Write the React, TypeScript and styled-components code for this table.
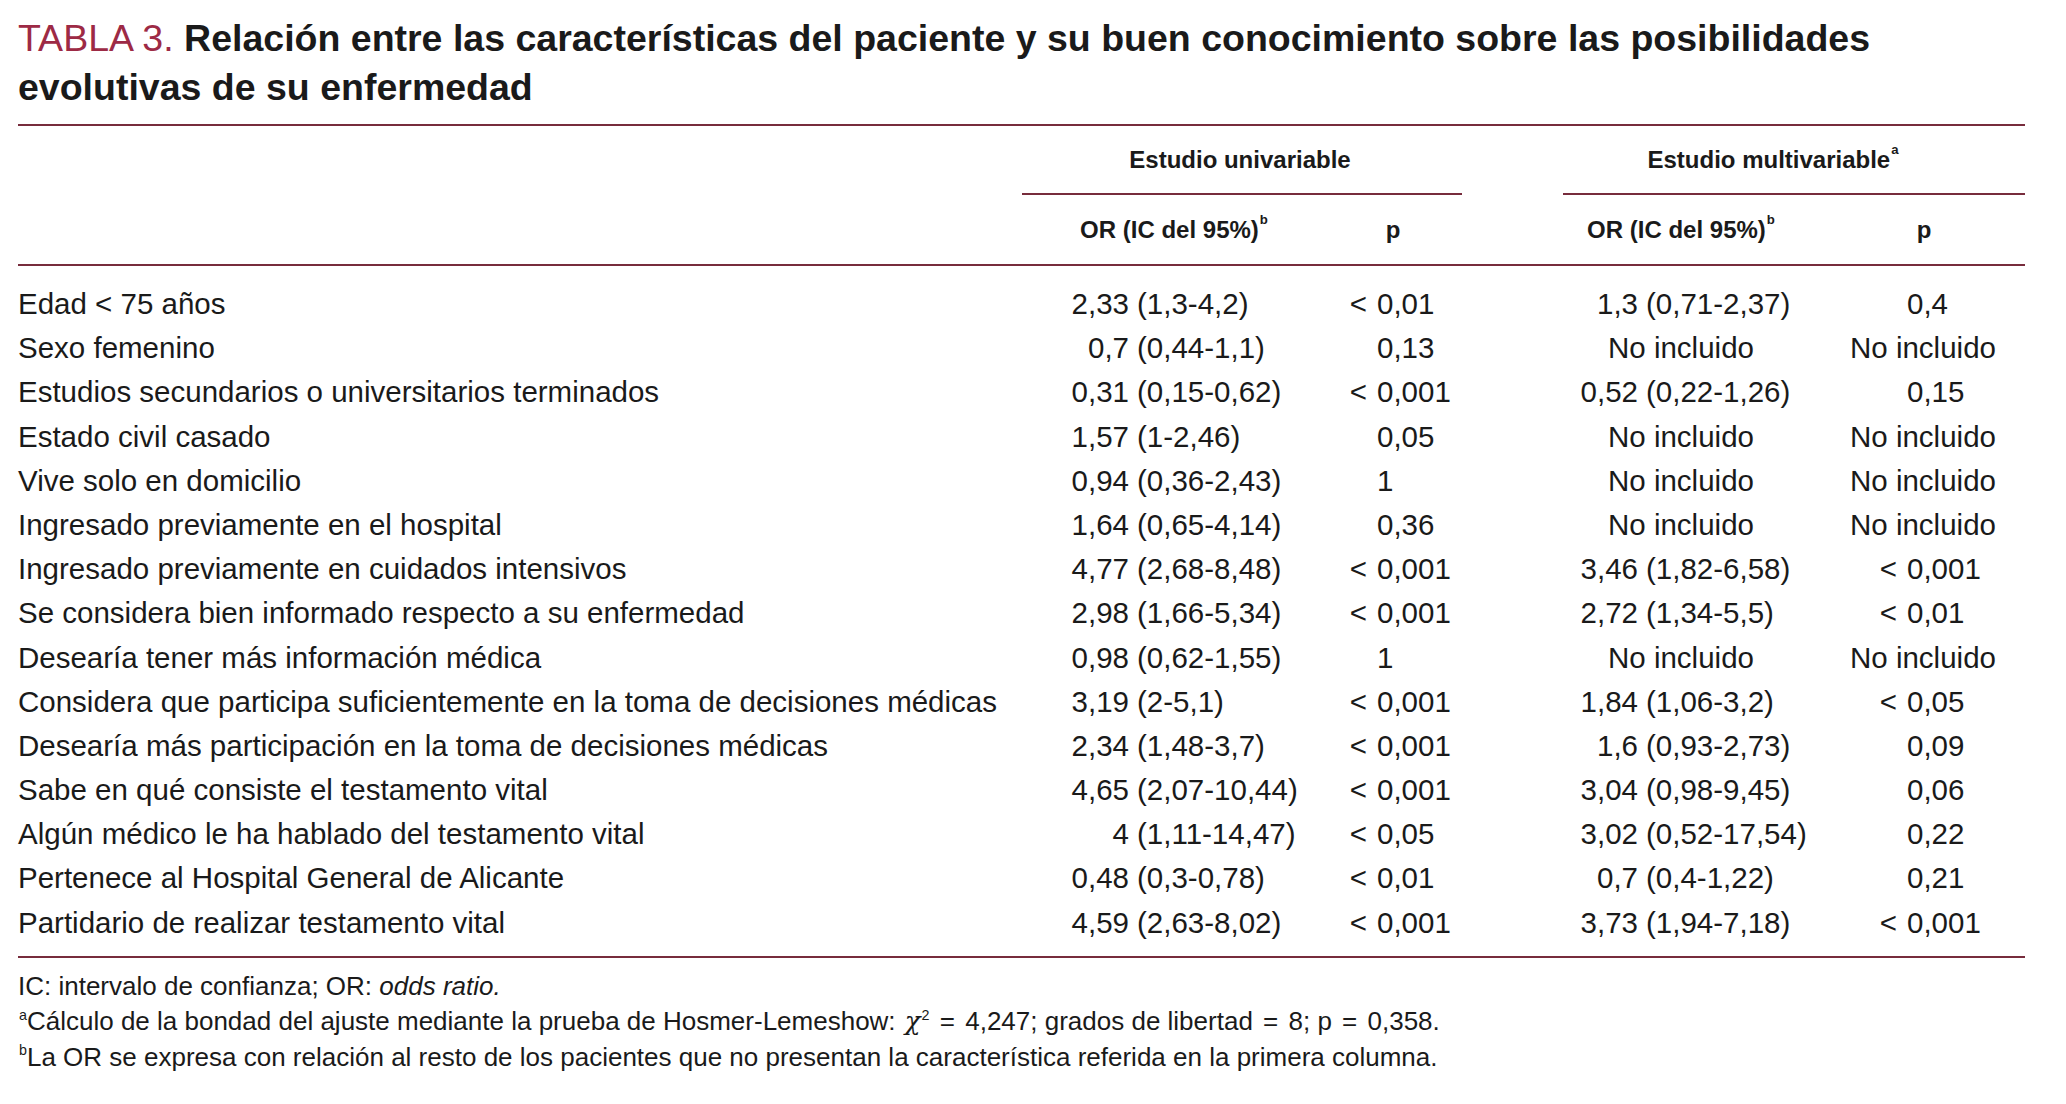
import React from "react";
import styled, { createGlobalStyle } from "styled-components";

const COLS = "1004px 310px 130px 101px 287px 175px";
const RULE = "#772c3c";
const TITLE_RED = "#9d2a45";
const INK = "#1a1a1a";
const BODY_FS = "29.5px";
const ROW_H = "44.2px";

const Global = createGlobalStyle`
  html, body { margin: 0; padding: 0; background: #ffffff; }
  body { font-family: "Liberation Sans", Arial, sans-serif; color: ${INK}; }
`;

const Page = styled.div`
  width: 2066px;
  height: 1104px;
  box-sizing: border-box;
  padding: 14px 41px 0 18px;
  overflow: hidden;
`;

const Title = styled.h1`
  margin: 0;
  font-size: 37.5px;
  line-height: 49px;
  font-weight: 700;
  color: ${INK};
  white-space: nowrap;
`;

const TitleLabel = styled.span`
  font-weight: 400;
  color: ${TITLE_RED};
`;

const Table = styled.div`
  display: grid;
  grid-template-columns: ${COLS};
  margin-top: 12px;
`;

const Rule = styled.div<{ $cols?: string }>`
  grid-column: ${(p) => p.$cols ?? "1 / -1"};
  height: 2px;
  background: ${RULE};
`;

const Spacer = styled.div<{ $h: number }>`
  grid-column: 1 / -1;
  height: ${(p) => p.$h}px;
`;

const GroupHead = styled.div<{ $cols: string; $pr?: number }>`
  grid-column: ${(p) => p.$cols};
  height: 67px;
  display: flex;
  align-items: center;
  justify-content: center;
  padding-right: ${(p) => p.$pr ?? 0}px;
  font-size: 24px;
  font-weight: 700;
  white-space: nowrap;
`;

const SubHead = styled.div<{ $pr?: number }>`
  height: 69px;
  display: flex;
  align-items: center;
  justify-content: center;
  padding-right: ${(p) => p.$pr ?? 0}px;
  font-size: 24px;
  font-weight: 700;
  white-space: nowrap;
`;

const Empty = styled.div``;

const Sup = styled.span`
  font-size: 0.55em;
  position: relative;
  top: -0.75em;
  line-height: 0;
  margin-left: 1px;
`;

const Cell = styled.div`
  font-size: ${BODY_FS};
  line-height: ${ROW_H};
  height: ${ROW_H};
  white-space: nowrap;
  display: flex;
`;

const Label = styled(Cell)``;

const NumPart = styled.span<{ $w: number }>`
  flex: none;
  width: ${(p) => p.$w}px;
  text-align: right;
`;

const RangePart = styled.span`
  margin-left: 8px;
`;

const Prefix = styled.span<{ $w: number }>`
  flex: none;
  width: ${(p) => p.$w}px;
  box-sizing: border-box;
  padding-right: 10px;
  text-align: right;
`;

const NotIncluded = styled(Cell)<{ $pl: number }>`
  padding-left: ${(p) => p.$pl}px;
`;

const Notes = styled.div`
  margin-top: 11px;
  font-size: 26px;
  line-height: 35.5px;
  white-space: nowrap;
`;

const Note = styled.div``;

const Chi = styled.span`
  font-family: "DejaVu Serif", "Liberation Serif", serif;
  font-style: italic;
  margin-left: 2px;
`;

const Eq = styled.span`
  margin: 0 3px;
`;

type Row = {
  label: string;
  uOr: string;
  uP: string;
  mOr: string | null;
  mP: string | null;
};

const rows: Row[] = [
  { label: "Edad < 75 años", uOr: "2,33 (1,3-4,2)", uP: "< 0,01", mOr: "1,3 (0,71-2,37)", mP: "0,4" },
  { label: "Sexo femenino", uOr: "0,7 (0,44-1,1)", uP: "0,13", mOr: null, mP: null },
  { label: "Estudios secundarios o universitarios terminados", uOr: "0,31 (0,15-0,62)", uP: "< 0,001", mOr: "0,52 (0,22-1,26)", mP: "0,15" },
  { label: "Estado civil casado", uOr: "1,57 (1-2,46)", uP: "0,05", mOr: null, mP: null },
  { label: "Vive solo en domicilio", uOr: "0,94 (0,36-2,43)", uP: "1", mOr: null, mP: null },
  { label: "Ingresado previamente en el hospital", uOr: "1,64 (0,65-4,14)", uP: "0,36", mOr: null, mP: null },
  { label: "Ingresado previamente en cuidados intensivos", uOr: "4,77 (2,68-8,48)", uP: "< 0,001", mOr: "3,46 (1,82-6,58)", mP: "< 0,001" },
  { label: "Se considera bien informado respecto a su enfermedad", uOr: "2,98 (1,66-5,34)", uP: "< 0,001", mOr: "2,72 (1,34-5,5)", mP: "< 0,01" },
  { label: "Desearía tener más información médica", uOr: "0,98 (0,62-1,55)", uP: "1", mOr: null, mP: null },
  { label: "Considera que participa suficientemente en la toma de decisiones médicas", uOr: "3,19 (2-5,1)", uP: "< 0,001", mOr: "1,84 (1,06-3,2)", mP: "< 0,05" },
  { label: "Desearía más participación en la toma de decisiones médicas", uOr: "2,34 (1,48-3,7)", uP: "< 0,001", mOr: "1,6 (0,93-2,73)", mP: "0,09" },
  { label: "Sabe en qué consiste el testamento vital", uOr: "4,65 (2,07-10,44)", uP: "< 0,001", mOr: "3,04 (0,98-9,45)", mP: "0,06" },
  { label: "Algún médico le ha hablado del testamento vital", uOr: "4 (1,11-14,47)", uP: "< 0,05", mOr: "3,02 (0,52-17,54)", mP: "0,22" },
  { label: "Pertenece al Hospital General de Alicante", uOr: "0,48 (0,3-0,78)", uP: "< 0,01", mOr: "0,7 (0,4-1,22)", mP: "0,21" },
  { label: "Partidario de realizar testamento vital", uOr: "4,59 (2,63-8,02)", uP: "< 0,001", mOr: "3,73 (1,94-7,18)", mP: "< 0,001" },
];

function OrValue({ value, numWidth }: { value: string; numWidth: number }) {
  const i = value.indexOf(" ");
  return (
    <Cell>
      <NumPart $w={numWidth}>{value.slice(0, i)}</NumPart>
      <RangePart>{value.slice(i + 1)}</RangePart>
    </Cell>
  );
}

function PValue({ value, prefixWidth }: { value: string; prefixWidth: number }) {
  const hasLt = value.startsWith("<");
  return (
    <Cell>
      <Prefix $w={prefixWidth}>{hasLt ? "<" : ""}</Prefix>
      <span>{hasLt ? value.slice(2) : value}</span>
    </Cell>
  );
}

export default function App() {
  return (
    <>
      <Global />
      <Page>
        <Title>
          <TitleLabel>TABLA 3.</TitleLabel> Relación entre las características del paciente y su buen
          conocimiento sobre las posibilidades
          <br />
          evolutivas de su enfermedad
        </Title>

        <Table>
          <Rule />
          <Empty />
          <GroupHead $cols="2 / 4" $pr={4}>Estudio univariable</GroupHead>
          <Empty />
          <GroupHead $cols="5 / 7" $pr={42}>
            Estudio multivariable<Sup>a</Sup>
          </GroupHead>

          <Empty />
          <Rule $cols="2 / 4" />
          <Empty />
          <Rule $cols="5 / 7" />

          <Empty />
          <SubHead $pr={6}>
            OR (IC del 95%)<Sup>b</Sup>
          </SubHead>
          <SubHead $pr={8}>p</SubHead>
          <Empty />
          <SubHead $pr={51}>
            OR (IC del 95%)<Sup>b</Sup>
          </SubHead>
          <SubHead $pr={27}>p</SubHead>

          <Rule />
          <Spacer $h={16} />

          {rows.map((r) => (
            <React.Fragment key={r.label}>
              <Label>{r.label}</Label>
              <OrValue value={r.uOr} numWidth={107} />
              <PValue value={r.uP} prefixWidth={45} />
              <Empty />
              {r.mOr ? <OrValue value={r.mOr} numWidth={75} /> : <NotIncluded $pl={45}>No incluido</NotIncluded>}
              {r.mP ? <PValue value={r.mP} prefixWidth={57} /> : <NotIncluded $pl={0}>No incluido</NotIncluded>}
            </React.Fragment>
          ))}

          <Spacer $h={11} />
          <Rule />
        </Table>

        <Notes>
          <Note>
            IC: intervalo de confianza; OR: <em>odds ratio.</em>
          </Note>
          <Note>
            <Sup>a</Sup>Cálculo de la bondad del ajuste mediante la prueba de Hosmer-Lemeshow: <Chi>χ</Chi>
            <Sup>2</Sup> <Eq>=</Eq> 4,247; grados de libertad <Eq>=</Eq> 8; p <Eq>=</Eq> 0,358.
          </Note>
          <Note>
            <Sup>b</Sup>La OR se expresa con relación al resto de los pacientes que no presentan la característica
            referida en la primera columna.
          </Note>
        </Notes>
      </Page>
    </>
  );
}
